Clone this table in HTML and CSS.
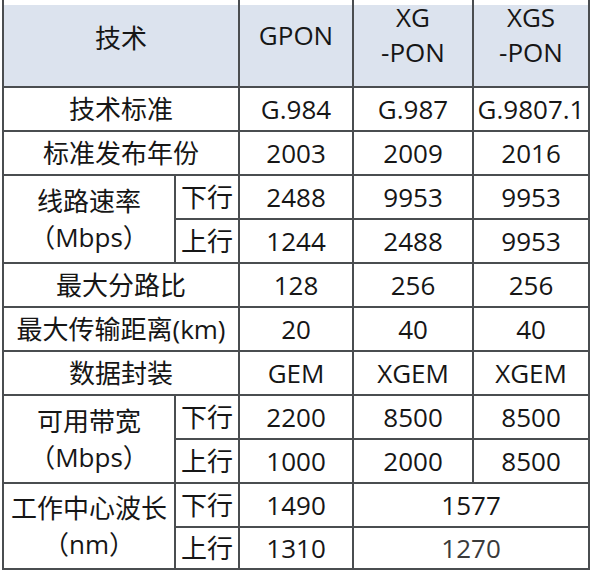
FILE: index.html
```html
<!DOCTYPE html>
<html lang="zh">
<head>
<meta charset="utf-8">
<title>PON 技术对比</title>
<link rel="stylesheet" href="styles.css">
</head>
<body>
<table class="spec">
  <colgroup>
    <col class="c-label">
    <col class="c-dir">
    <col class="c-gpon">
    <col class="c-xg">
    <col class="c-xgs">
  </colgroup>
  <thead>
    <tr class="head">
      <th colspan="2" class="head-label">技术</th>
      <th>GPON</th>
      <th>XG<br>-PON</th>
      <th>XGS<br>-PON</th>
    </tr>
  </thead>
  <tbody>
    <tr><td colspan="2">技术标准</td><td>G.984</td><td>G.987</td><td>G.9807.1</td></tr>
    <tr><td colspan="2">标准发布年份</td><td>2003</td><td>2009</td><td>2016</td></tr>
    <tr><td rowspan="2" class="multi">线路速率<br>（Mbps）</td><td>下行</td><td>2488</td><td>9953</td><td>9953</td></tr>
    <tr><td>上行</td><td>1244</td><td>2488</td><td>9953</td></tr>
    <tr><td colspan="2">最大分路比</td><td>128</td><td>256</td><td>256</td></tr>
    <tr><td colspan="2">最大传输距离(km)</td><td>20</td><td>40</td><td>40</td></tr>
    <tr><td colspan="2">数据封装</td><td>GEM</td><td>XGEM</td><td>XGEM</td></tr>
    <tr><td rowspan="2" class="multi">可用带宽<br>（Mbps）</td><td>下行</td><td>2200</td><td>8500</td><td>8500</td></tr>
    <tr><td>上行</td><td>1000</td><td>2000</td><td>8500</td></tr>
    <tr><td rowspan="2" class="multi">工作中心波长<br>（nm）</td><td>下行</td><td>1490</td><td colspan="2">1577</td></tr>
    <tr class="last"><td>上行</td><td>1310</td><td colspan="2" class="faint">1270</td></tr>
  </tbody>
</table>
</body>
</html>
```

FILE: styles.css
```css
html, body {
  margin: 0;
  padding: 0;
  background: #ffffff;
}

body {
  padding-left: 2px;
  font-family: "Open Sans", "Noto Sans CJK SC", sans-serif;
  color: #161616;
}

.spec {
  border-collapse: collapse;
  table-layout: fixed;
  width: 586px;
  font-size: 26px;
  border-left: 2px solid #3c3f42;
  border-right: 2px solid #3c3f42;
  border-bottom: 2px solid #3c3f42;
}

.c-label { width: 172px; }
.c-dir { width: 64px; }
.c-gpon { width: 114px; }
.c-xg { width: 120px; }
.c-xgs { width: 116px; }

.spec th,
.spec td {
  border: 2px solid #4a4d50;
  padding: 0;
  text-align: center;
  vertical-align: middle;
  font-weight: normal;
  white-space: nowrap;
  line-height: 35px;
}

.spec th {
  border-top: none;
  background: linear-gradient(#ffffff 0 5px, #dce3ee 5px);
  padding-bottom: 16px;
}

.head {
  height: 84px;
}

.spec th.head-label {
  padding-bottom: 10px;
}

.spec tbody tr {
  height: 44px;
}

.spec tbody tr.last {
  height: 42px;
}

.spec td.multi {
  line-height: 36px;
}

.spec td.faint {
  color: #3a3a3a;
}
```
